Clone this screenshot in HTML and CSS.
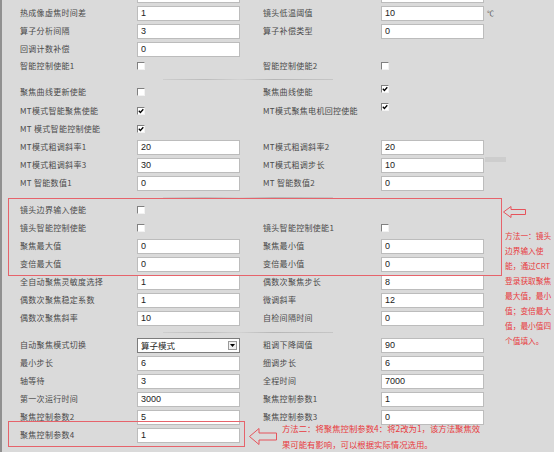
FILE: index.html
```html
<!DOCTYPE html>
<html lang="zh-CN">

<head>
  <meta charset="UTF-8">
  <meta name="viewport" content="width=device-width, initial-scale=1.0">
  <title>聚焦参数配置</title>
  <link rel="stylesheet" href="styles.css">
</head>

<body>
  <div class="panel">
    <div class="row">
      <span class="lbl"></span><input class="field" type="text" value="">
      <span class="lbl"></span><input class="field" type="text" value="">
    </div>
    <div class="row">
      <span class="lbl">热成像虚焦时间差</span><input class="field" type="text" value="1">
      <span class="lbl">镜头低温阈值</span><input class="field" type="text" value="10"><span class="unit">℃</span>
    </div>
    <div class="row">
      <span class="lbl">算子分析间隔</span><input class="field" type="text" value="3">
      <span class="lbl">算子补偿类型</span><input class="field" type="text" value="0">
    </div>
    <div class="row">
      <span class="lbl">回调计数补偿</span><input class="field" type="text" value="0">
    </div>
    <div class="row short">
      <span class="lbl">智能控制使能1</span><span class="chk"></span>
      <span class="lbl">智能控制使能2</span><span class="chk"></span>
    </div>

    <div class="sep"></div>

    <div class="row">
      <span class="lbl">聚焦曲线更新使能</span><span class="chk"></span>
      <span class="lbl">聚焦曲线使能</span><span class="chk high"><svg viewBox="0 0 6 6"><path d="M0.8 2.8 L2.4 4.5 L5.3 1.2" /></svg></span>
    </div>
    <div class="row tall">
      <span class="lbl">MT模式智能聚焦使能</span><span class="chk"><svg viewBox="0 0 6 6"><path d="M0.8 2.8 L2.4 4.5 L5.3 1.2" /></svg></span>
      <span class="lbl">MT模式聚焦电机回控使能</span><span class="chk high"><svg viewBox="0 0 6 6"><path d="M0.8 2.8 L2.4 4.5 L5.3 1.2" /></svg></span>
    </div>
    <div class="row">
      <span class="lbl">MT 模式智能控制使能</span><span class="chk"><svg viewBox="0 0 6 6"><path d="M0.8 2.8 L2.4 4.5 L5.3 1.2" /></svg></span>
    </div>
    <div class="row">
      <span class="lbl">MT模式粗调斜率1</span><input class="field" type="text" value="20">
      <span class="lbl">MT模式粗调斜率2</span><input class="field" type="text" value="20">
    </div>
    <div class="row">
      <span class="lbl">MT模式粗调斜率3</span><input class="field" type="text" value="30">
      <span class="lbl">MT模式粗调步长</span><input class="field" type="text" value="10">
    </div>
    <div class="row">
      <span class="lbl">MT 智能数值1</span><input class="field" type="text" value="0">
      <span class="lbl">MT 智能数值2</span><input class="field" type="text" value="0">
    </div>

    <div class="sep"></div>

    <div class="row">
      <span class="lbl">镜头边界输入使能</span><span class="chk"></span>
    </div>
    <div class="row">
      <span class="lbl">镜头智能控制使能</span><span class="chk"></span>
      <span class="lbl">镜头智能控制使能1</span><span class="chk"></span>
    </div>
    <div class="row">
      <span class="lbl">聚焦最大值</span><input class="field" type="text" value="0">
      <span class="lbl">聚焦最小值</span><input class="field" type="text" value="0">
    </div>
    <div class="row">
      <span class="lbl">变倍最大值</span><input class="field" type="text" value="0">
      <span class="lbl">变倍最小值</span><input class="field" type="text" value="0">
    </div>
    <div class="row">
      <span class="lbl">全自动聚焦灵敏度选择</span><input class="field" type="text" value="1">
      <span class="lbl">偶数次聚焦步长</span><input class="field" type="text" value="8">
    </div>
    <div class="row">
      <span class="lbl">偶数次聚焦稳定系数</span><input class="field" type="text" value="1">
      <span class="lbl">微调斜率</span><input class="field" type="text" value="12">
    </div>
    <div class="row">
      <span class="lbl">偶数次聚焦斜率</span><input class="field" type="text" value="10">
      <span class="lbl">自检间隔时间</span><input class="field" type="text" value="0">
    </div>

    <div class="sep"></div>

    <div class="row">
      <span class="lbl">自动聚焦模式切换</span>
      <div class="select">
        <span>算子模式</span>
        <span class="drop"><svg viewBox="0 0 5 3"><path d="M0 0 H5 L2.5 3 Z" /></svg></span>
      </div>
      <span class="lbl">粗调下降阈值</span><input class="field" type="text" value="90">
    </div>
    <div class="row">
      <span class="lbl">最小步长</span><input class="field" type="text" value="6">
      <span class="lbl">细调步长</span><input class="field" type="text" value="6">
    </div>
    <div class="row">
      <span class="lbl">轴等待</span><input class="field" type="text" value="3">
      <span class="lbl">全程时间</span><input class="field" type="text" value="7000">
    </div>
    <div class="row">
      <span class="lbl">第一次运行时间</span><input class="field" type="text" value="3000">
      <span class="lbl">聚焦控制参数1</span><input class="field" type="text" value="1">
    </div>
    <div class="row">
      <span class="lbl">聚焦控制参数2</span><input class="field" type="text" value="5">
      <span class="lbl">聚焦控制参数3</span><input class="field" type="text" value="0">
    </div>
    <div class="row">
      <span class="lbl">聚焦控制参数4</span><input class="field" type="text" value="1">
    </div>
  </div>

  <!-- 标注：红框、箭头和说明 -->
  <div class="mark box1"></div>
  <div class="mark box2"></div>
  <div class="ghost"></div>

  <svg class="arrow arrow1" viewBox="0 0 23 12">
    <polygon points="0.5,6 8,0.5 8,3.5 22.5,3.5 22.5,8.5 8,8.5 8,11.5" />
  </svg>
  <svg class="arrow arrow2" viewBox="0 0 28 17">
    <polygon points="0.5,8.5 10,0.5 10,5 27.5,5 27.5,12 10,12 10,16.5" />
  </svg>

  <p class="note note1">方法一：镜头<br>边界输入使<br>能，通过CRT<br>登录获取聚焦<br>最大值，最小<br>值；变倍最大<br>值，最小值四<br>个值填入。</p>
  <p class="note note2">方法二：将聚焦控制参数4：将2改为1，该方法聚焦效<br>果可能有影响，可以根据实际情况选用。</p>
</body>

</html>
```

FILE: styles.css
```css
body {
  margin: 0;
  height: 452px;
  overflow: hidden;
  position: relative;
  background-color: #dadada;
  /* bord gauche sombre de la fenêtre */
  box-shadow: inset 2px 0 #909090;
  font-family: "Noto Sans CJK SC", "Liberation Sans", sans-serif;
  font-size: 8px;
  color: #4a4a4a;
}

.panel {
  margin-top: -14px;
  padding-left: 20px;
}

.row {
  display: grid;
  grid-template-columns: 117px 126px 118px 103px auto;
  align-items: center;
  height: 18px;
}

.row.short {
  height: 16px;
}

.row.tall {
  height: 19px;
}

.lbl {
  white-space: nowrap;
  line-height: 10px;
  letter-spacing: 0.3px;
}

.field {
  width: 103px;
  height: 15px;
  box-sizing: border-box;
  margin: 0;
  padding: 0 3px;
  border: 1px solid #bcbcbc;
  background-color: #ffffff;
  font-family: "Liberation Sans", sans-serif;
  font-size: 9px;
  color: #222222;
  outline: none;
}

.unit {
  padding-left: 3px;
  font-size: 7px;
  color: #555555;
}

/* case à cocher style Windows classique */
.chk {
  justify-self: start;
  width: 8px;
  height: 8px;
  box-sizing: border-box;
  border-top: 1px solid #808080;
  border-left: 1px solid #808080;
  border-right: 1px solid #f2f2f2;
  border-bottom: 1px solid #f2f2f2;
  background-color: #ffffff;
  display: flex;
}

.chk.high {
  align-self: start;
  margin-top: 2px;
}

.chk svg {
  width: 6px;
  height: 6px;
}

.chk path {
  fill: none;
  stroke: #000000;
  stroke-width: 1.3;
}

.select {
  width: 103px;
  height: 15px;
  box-sizing: border-box;
  border: 1px solid #7c7c7c;
  background-color: #ffffff;
  display: flex;
  align-items: center;
  justify-content: space-between;
  padding: 0 2px 0 3px;
  font-size: 8.5px;
  color: #1e1e1e;
}

.drop {
  width: 9px;
  height: 9px;
  box-sizing: border-box;
  border: 1px solid #9a9a9a;
  background-color: #f0f0f0;
  display: flex;
  align-items: center;
  justify-content: center;
}

.drop svg {
  width: 5px;
  height: 3px;
  fill: #000000;
}

.sep {
  height: 9px;
  position: relative;
}

.sep::after {
  content: "";
  position: absolute;
  top: 5px;
  left: 143px;
  width: 170px;
  height: 1px;
  background: linear-gradient(to right, #cdcdcd, #bcbcbc 25%, #d2d2d2 45%, #b6b6b6 65%, #c6c6c6);
}

/* annotations rouges */
.mark {
  position: absolute;
  box-sizing: border-box;
  border: 1px solid #e6636b;
}

.box1 {
  left: 8px;
  top: 198px;
  width: 494px;
  height: 78px;
}

.box2 {
  left: 8px;
  top: 421px;
  width: 237px;
  height: 26px;
}

.ghost {
  position: absolute;
  left: 485px;
  top: 157px;
  width: 21px;
  height: 5px;
  background-color: #cdcdcd;
}

.arrow {
  position: absolute;
}

.arrow polygon {
  fill: none;
  stroke: #e6535b;
  stroke-width: 1;
}

.arrow1 {
  left: 503px;
  top: 206px;
  width: 23px;
  height: 12px;
}

.arrow2 {
  left: 249px;
  top: 428px;
  width: 28px;
  height: 17px;
}

.note {
  position: absolute;
  margin: 0;
  white-space: nowrap;
  color: #e83a40;
}

.note1 {
  left: 505px;
  top: 228px;
  font-size: 7.7px;
  line-height: 15px;
}

.note2 {
  left: 282px;
  top: 420px;
  font-size: 8.4px;
  line-height: 16px;
}
```
